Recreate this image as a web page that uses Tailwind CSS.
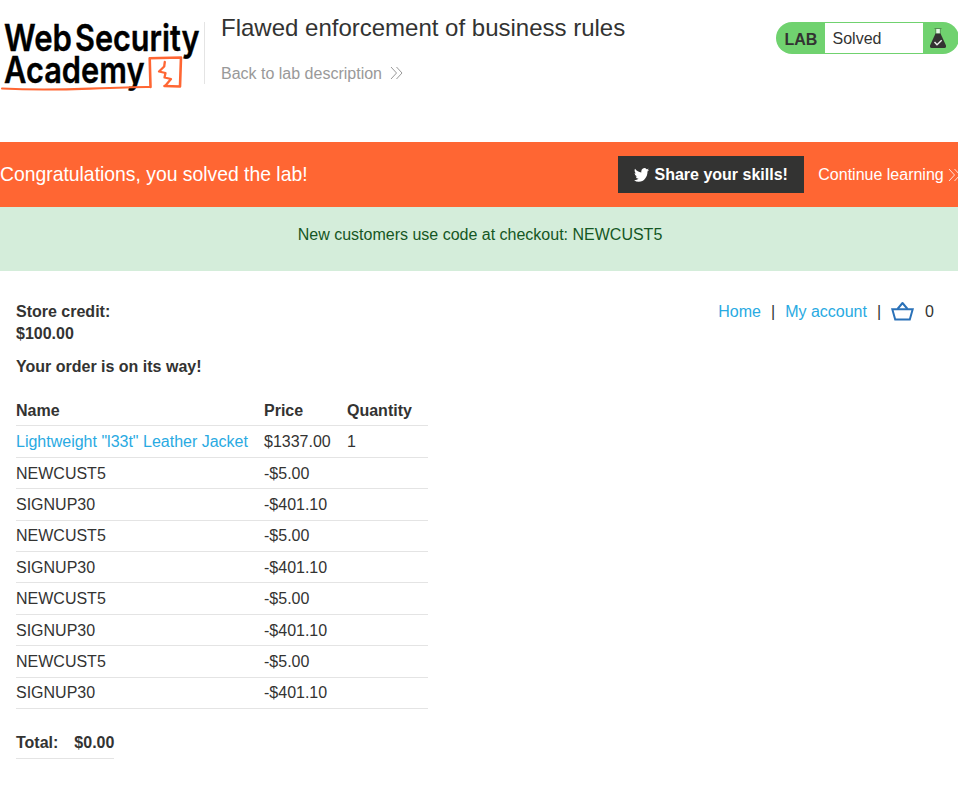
<!DOCTYPE html>
<html lang="en">
<head>
<meta charset="utf-8">
<title>Flawed enforcement of business rules</title>
<script src="https://cdn.jsdelivr.net/npm/@tailwindcss/browser@4"></script>
</head>
<body class="bg-white text-[#333332] text-base leading-[22.4px] font-['Liberation_Sans',Arial,sans-serif] overflow-hidden">
<header class="h-[142px] flex items-start">
  <svg class="w-[204px] h-[100px] shrink-0" viewBox="0 0 204 100" fill="none">
    <g fill="#000" stroke="#000" stroke-width=".4" font-family="Inter, sans-serif" font-weight="600" font-size="37">
      <text x="4" y="50.5" textLength="68" lengthAdjust="spacingAndGlyphs">Web</text>
      <text x="75" y="50.5" textLength="124.5" lengthAdjust="spacingAndGlyphs">Security</text>
      <text x="4" y="82.8" textLength="140.5" lengthAdjust="spacingAndGlyphs">Academy</text>
    </g>
    <g stroke="#ff6633" stroke-linejoin="round" stroke-linecap="round">
      <path d="M2 88.5 Q40 90.5 90 88.6 T150 87" stroke-width="2.1"/>
      <path d="M150.5 87 L149.7 58.3 L181 57.5 L180 86.5 L164.5 86" stroke-width="2.6"/>
      <path d="M164.8 62 L164.2 66.5 L159 71.5 L165.5 73 L164.5 77.5 L171 79 L165.5 85.5" stroke-width="2.3"/>
    </g>
  </svg>
  <div class="mt-[22px] h-[62px] border-l border-[#e4e4e4] pl-4">
    <h2 class="text-2xl leading-7 -mt-2">Flawed enforcement of business rules</h2>
    <a class="mt-[21px] flex items-center text-[#999999]">Back to lab description
      <svg class="ml-2 w-3.5 h-3.5 -mt-0.5" viewBox="0 0 14 14" fill="none" stroke="#999" stroke-width="1"><path d="M1 1 L6.5 7 L1 13 M6.5 1 L12 7 L6.5 13"/></svg>
    </a>
  </div>
  <div class="ml-auto -mr-px mt-[22px] w-[183px] h-8 rounded-full bg-[#70d26f] flex items-center">
    <b class="w-[49px] pl-[8.5px] pt-[4px]">LAB</b>
    <span class="w-[98px] h-[30px] bg-white pl-[7.5px] leading-[31px]">Solved</span>
    <svg class="ml-[7px] w-4 h-5" viewBox="0 0 16 20" fill="none"><path d="M5.8 1 V6.5 M10.2 1 V6.5" stroke="#568f55" stroke-width="1"/><path d="M6.3 .8h3.5v4.8H6.3z" fill="#e5f4e5"/><path d="M4.5 .5h7" stroke="#568f55"/><path d="M5.5 5.5h5L16 17.5Q16.3 20 14.5 20h-13Q-.3 20 0 17.5z" fill="#333332"/><path d="M4.5 14 L7 16.7 L11.7 12.3" stroke="#eee" stroke-width="1.4"/></svg>
  </div>
</header>
<section class="h-[65px] bg-[#ff6633] text-white flex items-center">
  <h4 class="text-[19.35px]">Congratulations, you solved the lab!</h4>
  <a class="ml-auto w-[186px] h-[37px] -mt-px bg-[#333332] flex items-center pl-4 pt-0.5 font-bold whitespace-nowrap">
    <svg class="w-[15px] h-[14px] mr-[5.5px] -mt-px" viewBox="0 2 24 20" preserveAspectRatio="none" fill="#fff"><path d="M23.953 4.57a10 10 0 01-2.825.775 4.958 4.958 0 002.163-2.723c-.951.555-2.005.959-3.127 1.184a4.92 4.92 0 00-8.384 4.482C7.69 8.095 4.067 6.13 1.64 3.162a4.822 4.822 0 00-.666 2.475c0 1.71.87 3.213 2.188 4.096a4.904 4.904 0 01-2.228-.616v.06a4.923 4.923 0 003.946 4.827 4.996 4.996 0 01-2.212.085 4.936 4.936 0 004.604 3.417 9.867 9.867 0 01-6.102 2.105c-.39 0-.779-.023-1.17-.067a13.995 13.995 0 007.557 2.209c9.053 0 13.998-7.496 13.998-13.985 0-.21 0-.42-.015-.63A9.935 9.935 0 0024 4.59z"/></svg>Share your skills!</a>
  <a class="w-[154px] pl-[14.3px] pt-px flex items-center whitespace-nowrap">Continue learning
    <svg class="ml-1 w-3.5 h-3.5 shrink-0" viewBox="0 0 14 14" fill="none" stroke="#ffe0d6" stroke-width="1"><path d="M1 1 L6.5 7 L1 13 M6.5 1 L12 7 L6.5 13"/></svg>
  </a>
</section>
<section class="h-16 bg-[#d4edda] text-[#155724] text-center pt-[17px] pl-[2px]">New customers use code at checkout: NEWCUST5</section>
<main class="px-4 pt-[30px]">
  <div class="flex items-start justify-between h-[55.2px]">
    <div class="font-bold"><p>Store credit:</p><p>$100.00</p></div>
    <nav class="flex items-center pr-2">
      <a class="text-[#29aae2]">Home</a><span class="px-[10px]">|</span><a class="text-[#29aae2]">My account</a><span class="pl-[10px]">|</span>
      <svg class="ml-[10px] mr-[11px] -mt-0.5 w-[23px] h-5" viewBox="0 0 23 20" fill="none" stroke="#2a71b8" stroke-width="2"><path d="M1.3 8.2 H21.7 L18.8 18.6 H4.2 Z"/><path d="M6.5 8 L11.5 2 L16.5 8" stroke-linejoin="round"/></svg>
      <span>0</span>
    </nav>
  </div>
  <p class="font-bold">Your order is on its way!</p>
  <table class="mt-[16.5px] w-[412px] table-fixed border-separate border-spacing-0 text-left [&_td]:pt-[4.7px] [&_td]:pb-[3.3px] [&_td]:px-0 [&_th]:pt-[4.7px] [&_th]:pb-[3.3px] [&_td]:border-b [&_th]:border-b [&_td]:border-[#e4e4e4] [&_th]:border-[#e4e4e4]">
    <colgroup><col class="w-[248px]"><col class="w-[83px]"><col class="w-[81px]"></colgroup>
    <tbody>
    <tr><th>Name</th><th>Price</th><th>Quantity</th></tr>
    <tr><td><a class="text-[#29aae2] whitespace-nowrap">Lightweight "l33t" Leather Jacket</a></td><td>$1337.00</td><td>1</td></tr>
    <tr><td>NEWCUST5</td><td>-$5.00</td><td></td></tr>
    <tr><td>SIGNUP30</td><td>-$401.10</td><td></td></tr>
    <tr><td>NEWCUST5</td><td>-$5.00</td><td></td></tr>
    <tr><td>SIGNUP30</td><td>-$401.10</td><td></td></tr>
    <tr><td>NEWCUST5</td><td>-$5.00</td><td></td></tr>
    <tr><td>SIGNUP30</td><td>-$401.10</td><td></td></tr>
    <tr><td>NEWCUST5</td><td>-$5.00</td><td></td></tr>
    <tr><td>SIGNUP30</td><td>-$401.10</td><td></td></tr>
    </tbody>
  </table>
  <div class="mt-[18px] inline-flex gap-4 pt-[4.7px] pb-[3.7px] border-b border-[#e4e4e4] font-bold"><span>Total:</span><span>$0.00</span></div>
</main>
</body>
</html>
